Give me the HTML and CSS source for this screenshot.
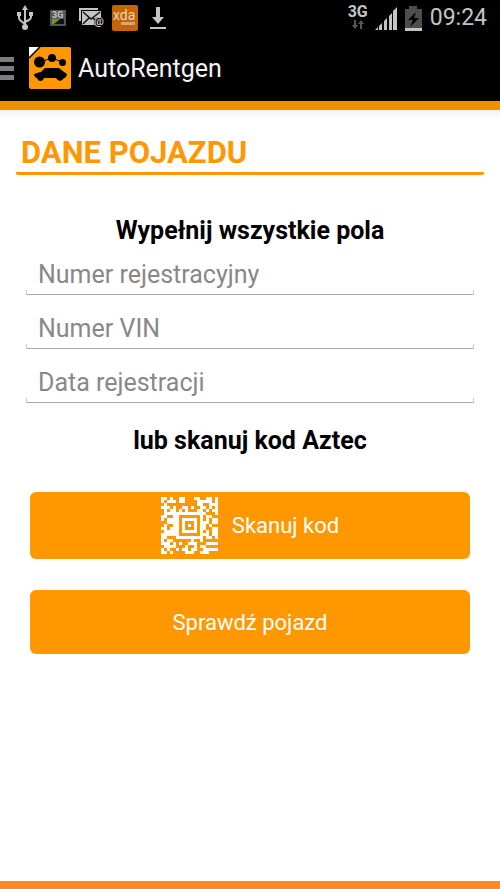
FILE: index.html
```html
<!DOCTYPE html>
<html lang="pl">
<head>
<meta charset="utf-8">
<meta name="viewport" content="width=device-width, initial-scale=1">
<title>AutoRentgen</title>
<link rel="stylesheet" href="styles.css">
</head>
<body>
<div class="status">
  <div class="notices">
    <svg class="usb" width="16" height="26" viewBox="0 0 16 26" fill="none" stroke="#c4c4c4" stroke-width="2"><path d="M8 4v18M2 9v4q0 2 2 3l4 3M14 9v3q0 2-2 3l-4 2"/><path d="M8 0l3 5H5zM0 7h4v4H0zM12 7h4v4h-4z" fill="#c4c4c4" stroke="none"/><circle cx="8" cy="22" r="3" fill="#c4c4c4" stroke="none"/></svg>
    <svg class="sim" width="16" height="16" viewBox="0 0 16 16"><path fill="#555" d="M0 0h16v16H0z"/><path fill="#111" d="M2 9h12v5H2z"/><path fill="#6b9c00" d="M2 9h8l-6 5H2z"/><text x="2" y="8" class="sim-text">3G</text></svg>
    <svg class="mail" width="26" height="20" viewBox="0 0 26 20"><path d="M1 13V1h18" fill="none" stroke="#c4c4c4" stroke-width="2"/><path fill="#c4c4c4" d="M3 3h19v14H3z"/><path d="M4 4l8 7 9-7M4 16l6-6M20 16l-6-6" fill="none" stroke="#111" stroke-width="1.5"/><circle cx="20" cy="14" r="5" fill="#000"/><text x="15" y="17" class="at">@</text></svg>
    <svg class="xda" width="26" height="26" viewBox="0 0 26 26"><rect width="26" height="26" rx="2" fill="#c86400"/><text x="1" y="15" class="xda-text">xda</text><path fill="#d5a477" d="M9 17h14v3H9z"/></svg>
    <svg class="load" width="18" height="23" viewBox="0 0 18 23"><path fill="#c4c4c4" d="M7 0h4v10h4l-6 7-6-7h4zM1 20h16v2H1z"/></svg>
  </div>
  <div class="system">
    <div class="network"><span>3G</span><svg width="14" height="9" viewBox="0 0 14 9"><path fill="#585858" d="M3 0h2v5h2L4 9 1 5h2zM9 9h2V4h2l-3-4-3 4h2z"/></svg></div>
    <svg class="signal" width="22" height="23" viewBox="0 0 22 23"><path fill="#c4c4c4" d="M0 23l3-3v3zM4 19l3-3v7H4zM9 14l3-3v12H9zM14 9l3-3v17h-3zM18 4l4-4v23h-4z"/></svg>
    <svg class="battery" width="17" height="25" viewBox="0 0 17 25"><path fill="#4d4d4d" d="M0 3h4V0h8v3h5v19H0z"/><path fill="#c4c4c4" d="M0 22h17v3H0z"/><path fill="#000" d="M11 6L3 14h5l-3 7 9-9H9z"/></svg>
    <time>09:24</time>
  </div>
</div>
<header class="bar">
  <button class="drawer" aria-label="Menu"><span></span><span></span><span></span></button>
  <svg class="logo" width="42" height="42" viewBox="0 0 42 42"><rect width="42" height="42" rx="2" fill="#ff9800"/><path fill="#fff" d="M0 0h10L0 10z"/><path d="M11 0L0 11" stroke="#000" stroke-width="1.5"/><path d="M11 15l12-4 10 4" fill="none" stroke="#000" stroke-width="1"/><circle cx="10.5" cy="15" r="5.5"/><circle cx="23" cy="11" r="4"/><circle cx="33.5" cy="15.5" r="3.5"/><path d="M4.5 27.500Q9 25 12 25l4-4h14l5 4q3 1 3 3l-2 3h-1q-2 3-4 3t-4-3H15q-1 3-3.500 3T8 31H7z"/></svg>
  <h1>AutoRentgen</h1>
</header>
<main>
  <h2>DANE POJAZDU</h2>
  <form>
    <p class="prompt">Wypełnij wszystkie pola</p>
    <div class="field"><input type="text" aria-label="Numer rejestracyjny" placeholder="Numer rejestracyjny"></div>
    <div class="field"><input type="text" aria-label="Numer VIN" placeholder="Numer VIN"></div>
    <div class="field"><input type="text" aria-label="Data rejestracji" placeholder="Data rejestracji"></div>
    <p class="prompt scan-prompt">lub skanuj kod Aztec</p>
    <button class="action scan" type="button"><svg id="aztec" width="57" height="57" viewBox="0 0 19 19" shape-rendering="crispEdges"></svg><span>Skanuj kod</span></button>
    <button class="action" type="button">Sprawdź pojazd</button>
  </form>
</main>
<footer></footer>
<script src="aztec.js"></script>
</body>
</html>
```
FILE: styles.css
```css
* { box-sizing: border-box; }
body {
  margin: 0;
  min-height: 100vh;
  display: flex;
  flex-direction: column;
  background: #fff;
  color: #000;
  font-family: Roboto, "Liberation Sans", sans-serif;
}
h1, h2, p { margin: 0; font-weight: 400; }
button, input { font: inherit; border: 0; margin: 0; }
svg { display: block; flex: none; }
.status {
  height: 36px;
  padding: 0 13px 0 17px;
  display: flex;
  justify-content: space-between;
  background: #000;
  color: #c4c4c4;
}
.notices, .system { display: flex; align-items: center; }
.sim { margin-left: 17px; }
.mail { margin-left: 13px; }
.xda { margin-left: 7px; }
.load { margin-left: 11px; }
.sim-text { font-size: 9px; font-weight: 700; fill: #c4c4c4; }
.at { font-size: 11px; font-weight: 700; fill: #c4c4c4; }
.xda-text { font-size: 14px; fill: #e8d5c4; }
.network {
  display: flex;
  flex-direction: column;
  align-items: center;
  padding-bottom: 4px;
  font-size: 16px;
  line-height: 16px;
  font-weight: 700;
}
.signal { margin-left: 7px; }
.battery { margin-left: 8px; }
time { margin-left: 8px; font-size: 23px; line-height: 36px; }
.bar {
  height: 74px;
  padding-bottom: 2px;
  display: flex;
  align-items: center;
  background: #000;
  border-bottom: 9px solid #f09000;
}
.drawer {
  width: 14px;
  padding: 2px 0 0;
  display: flex;
  flex-direction: column;
  gap: 4px;
  background: none;
}
.drawer span { height: 5px; background: #7d7d80; }
.logo { margin-left: 15px; }
h1 { margin-left: 7px; padding-top: 3px; font-size: 25px; line-height: 36px; color: #f3f3f3; }
main {
  flex: 1;
  padding: 24px 16px;
  background: linear-gradient(#f2f2f2, #fff 10px);
}
h2 {
  padding: 0 5px;
  border-bottom: 3px solid #ff9800;
  border-radius: 2px;
  color: #ff9800;
  font-size: 31px;
  font-weight: 700;
  line-height: 38px;
}
form { padding: 38px 10px 0; }
.prompt {
  font-size: 25px;
  line-height: 36px;
  font-weight: 700;
  text-align: center;
}
.scan-prompt { margin-top: 12px; }
.field { height: 54px; display: flex; align-items: flex-start; }
.field input {
  width: 100%;
  height: 46px;
  padding: 4px 12px 0;
  color: #333;
  background:
    linear-gradient(#ccc, #ccc) left bottom / 1px 5px no-repeat,
    linear-gradient(#ccc, #ccc) right bottom / 1px 5px no-repeat,
    linear-gradient(#aaa, #aaa) bottom / 100% 1px no-repeat;
  font-size: 25px;
}
.field input::placeholder { color: #888; opacity: 1; }
.action {
  width: calc(100% - 8px);
  min-height: 64px;
  margin: 31px 4px 0;
  padding: 0;
  display: flex;
  align-items: center;
  justify-content: center;
  border-radius: 6px;
  background: #ff9800;
  color: #fff;
  font-size: 22px;
}
.scan { min-height: 67px; margin-top: 33px; gap: 14px; }
footer { height: 8px; background: #ff8826; }
```
FILE: aztec.js
```javascript
const rows = [
  '##.#..##...##..##.#',
  '#.###.##....#####.#',
  '.#..........##..###',
  '###.#..##.#..##.#.#',
  '.#.##.#.#...##.#.##',
  '.##############...#',
  '##..##.......#.##..',
  '#.####.#####.#.#.##',
  '..####.#...#.###.##',
  '.#..##.#.#.#.##.#..',
  '##.###.#...#.##..##',
  '.#####.#####.#.#.##',
  '######.......###.##',
  '##...#########.##.#',
  '#.##......#..#.....',
  '###.#.#..###...####',
  '.####...#..#.##....',
  '#.#..#.##.##..#####',
  '##.#....###..###...'
];
document.getElementById('aztec').innerHTML = rows.map((row, y) =>
  [...row].map((cell, x) => cell === '#' ? `<path d="M${x} ${y}h1v1h-1z" fill="#fff"/>` : '').join('')
).join('');
```
